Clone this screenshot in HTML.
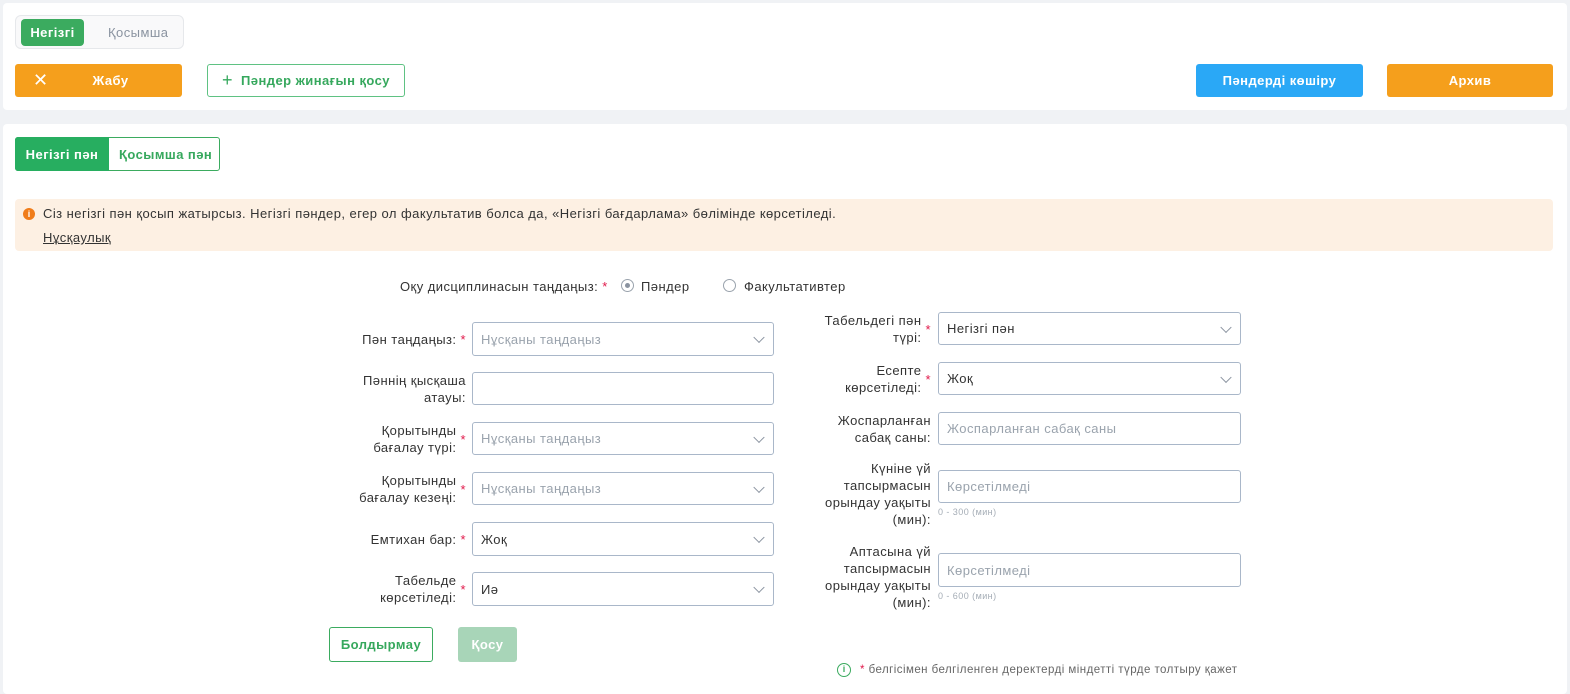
<!DOCTYPE html>
<html><head><meta charset="utf-8"><style>
*{box-sizing:border-box;margin:0;padding:0}
body{width:1570px;height:685px;background:#f0f2f5;font-family:"Liberation Sans",sans-serif;font-size:13px;color:#333;position:relative;overflow:hidden;letter-spacing:0.45px}
.a{position:absolute}
.card{background:#fff;border-radius:4px}
.btn{position:absolute;display:flex;align-items:center;justify-content:center;border-radius:3px;font-weight:bold;font-size:13px}
.lbl{position:absolute;text-align:right;font-size:13px;color:#333;line-height:17px;display:flex;align-items:center;justify-content:flex-end}
.req{color:#e0194a;margin-left:4px}
.in{position:absolute;border:1px solid #a9b7c9;border-radius:3px;background:#fff;display:flex;align-items:center;padding-left:8px;font-size:13px;color:#333}
.ph{color:#9aa3ad}
.chev{position:absolute;right:10px;top:50%;width:8px;height:8px;border-right:1.5px solid #8a93a0;border-bottom:1.5px solid #8a93a0;transform:translateY(-70%) rotate(45deg)}
.hint{position:absolute;font-size:9px;color:#a5adb6}
</style></head><body>
<div class="a card" style="left:3px;top:3px;width:1564px;height:107px"></div>
<div class="a card" style="left:3px;top:124px;width:1564px;height:570px"></div>

<div class="a" style="left:15px;top:15px;width:169px;height:34px;border:1px solid #e6e8eb;border-radius:6px;background:#f9f9fa"></div>
<div class="btn" style="left:21px;top:19px;width:63px;height:27px;background:#3bab5f;color:#fff;border-radius:4px">Негізгі</div>
<div class="a" style="left:108px;top:25px;color:#8a93a0;font-size:13px">Қосымша</div>

<div class="btn" style="left:15px;top:64px;width:167px;height:33px;background:#f59f1c;color:#fff;padding-left:24px"><span style="position:absolute;left:18px;font-size:18px;font-weight:normal">✕</span>Жабу</div>
<div class="btn" style="left:207px;top:64px;width:198px;height:33px;border:1.5px solid #5fc283;color:#36a85d;background:#fff"><span style="font-size:18px;font-weight:normal;margin-right:8px">+</span>Пәндер жинағын қосу</div>
<div class="btn" style="left:1196px;top:64px;width:167px;height:33px;background:#2aa8f6;color:#fff">Пәндерді көшіру</div>
<div class="btn" style="left:1387px;top:64px;width:166px;height:33px;background:#f59f1c;color:#fff">Архив</div>

<div class="a" style="left:15px;top:137px;width:205px;height:34px;border:1px solid #3bab5f;border-radius:3px"></div>
<div class="btn" style="left:15px;top:137px;width:94px;height:34px;background:#27ae60;color:#fff;border-radius:3px 0 0 3px">Негізгі пән</div>
<div class="a" style="left:119px;top:147px;color:#36a85d;font-size:13px;font-weight:bold">Қосымша пән</div>

<div class="a" style="left:15px;top:199px;width:1538px;height:52px;background:#fdf0e3;border-radius:4px"></div>
<div class="a" style="left:23px;top:208px;width:12px;height:12px;border-radius:50%;background:#f07c1a;color:#fff;font-size:9px;font-weight:bold;text-align:center;line-height:12px;letter-spacing:0">i</div>
<div class="a" style="left:43px;top:206px;font-size:13px;color:#333">Сіз негізгі пән қосып жатырсыз. Негізгі пәндер, егер ол факультатив болса да, «Негізгі бағдарлама» бөлімінде көрсетіледі.</div>
<div class="a" style="left:43px;top:230px;font-size:13px;color:#333;text-decoration:underline">Нұсқаулық</div>

<div class="a" style="left:400px;top:279px;font-size:13px">Оқу дисциплинасын таңдаңыз:<span class="req">*</span></div>
<div class="a" style="left:621px;top:279px;width:13px;height:13px;border:1px solid #9aa3ad;border-radius:50%"><div style="margin:3px;width:5px;height:5px;border-radius:50%;background:#8a93a0"></div></div>
<div class="a" style="left:641px;top:279px">Пәндер</div>
<div class="a" style="left:723px;top:279px;width:13px;height:13px;border:1px solid #9aa3ad;border-radius:50%"></div>
<div class="a" style="left:744px;top:279px">Факультативтер</div>

<div class="lbl" style="left:290px;top:322px;width:176px;height:34px">Пән таңдаңыз:<span class="req">*</span></div>
<div class="in" style="left:472px;top:322px;width:302px;height:34px"><span class="ph">Нұсқаны таңдаңыз</span><i class="chev"></i></div>
<div class="lbl" style="left:290px;top:372px;width:176px;height:34px">Пәннің қысқаша<br>атауы:</div>
<div class="in" style="left:472px;top:372px;width:302px;height:33px"></div>
<div class="lbl" style="left:290px;top:422px;width:176px;height:34px">Қорытынды<br>бағалау түрі:<span class="req">*</span></div>
<div class="in" style="left:472px;top:422px;width:302px;height:33px"><span class="ph">Нұсқаны таңдаңыз</span><i class="chev"></i></div>
<div class="lbl" style="left:290px;top:472px;width:176px;height:34px">Қорытынды<br>бағалау кезеңі:<span class="req">*</span></div>
<div class="in" style="left:472px;top:472px;width:302px;height:33px"><span class="ph">Нұсқаны таңдаңыз</span><i class="chev"></i></div>
<div class="lbl" style="left:290px;top:522px;width:176px;height:34px">Емтихан бар:<span class="req">*</span></div>
<div class="in" style="left:472px;top:522px;width:302px;height:34px">Жоқ<i class="chev"></i></div>
<div class="lbl" style="left:290px;top:572px;width:176px;height:34px">Табельде<br>көрсетіледі:<span class="req">*</span></div>
<div class="in" style="left:472px;top:572px;width:302px;height:34px">Иә<i class="chev"></i></div>

<div class="lbl" style="left:770px;top:312px;width:161px;height:34px">Табельдегі пән<br>түрі:<span class="req">*</span></div>
<div class="in" style="left:938px;top:312px;width:303px;height:33px">Негізгі пән<i class="chev"></i></div>
<div class="lbl" style="left:770px;top:362px;width:161px;height:34px">Есепте<br>көрсетіледі:<span class="req">*</span></div>
<div class="in" style="left:938px;top:362px;width:303px;height:33px">Жоқ<i class="chev"></i></div>
<div class="lbl" style="left:770px;top:412px;width:161px;height:34px">Жоспарланған<br>сабақ саны:</div>
<div class="in" style="left:938px;top:412px;width:303px;height:33px"><span class="ph">Жоспарланған сабақ саны</span></div>
<div class="lbl" style="left:770px;top:459px;width:161px;height:70px">Күніне үй<br>тапсырмасын<br>орындау уақыты<br>(мин):</div>
<div class="in" style="left:938px;top:470px;width:303px;height:33px"><span class="ph">Көрсетілмеді</span></div>
<div class="hint" style="left:938px;top:507px">0 - 300 (мин)</div>
<div class="lbl" style="left:770px;top:542px;width:161px;height:70px">Аптасына үй<br>тапсырмасын<br>орындау уақыты<br>(мин):</div>
<div class="in" style="left:938px;top:553px;width:303px;height:34px"><span class="ph">Көрсетілмеді</span></div>
<div class="hint" style="left:938px;top:591px">0 - 600 (мин)</div>

<div class="btn" style="left:329px;top:627px;width:104px;height:35px;border:1.5px solid #3bab5f;color:#36a85d;background:#fff">Болдырмау</div>
<div class="btn" style="left:458px;top:627px;width:59px;height:35px;background:#a8d5b8;color:#fff">Қосу</div>

<div class="a" style="left:837px;top:663px;width:14px;height:14px;border:1.5px solid #3bab5f;border-radius:50%;color:#3bab5f;font-size:9px;font-weight:bold;text-align:center;line-height:11px;letter-spacing:0">i</div>
<div class="a" style="left:860px;top:664px;font-size:11.5px;color:#666"><span style="color:#e0194a">*</span> белгісімен белгіленген деректерді міндетті түрде толтыру қажет</div>
</body></html>
